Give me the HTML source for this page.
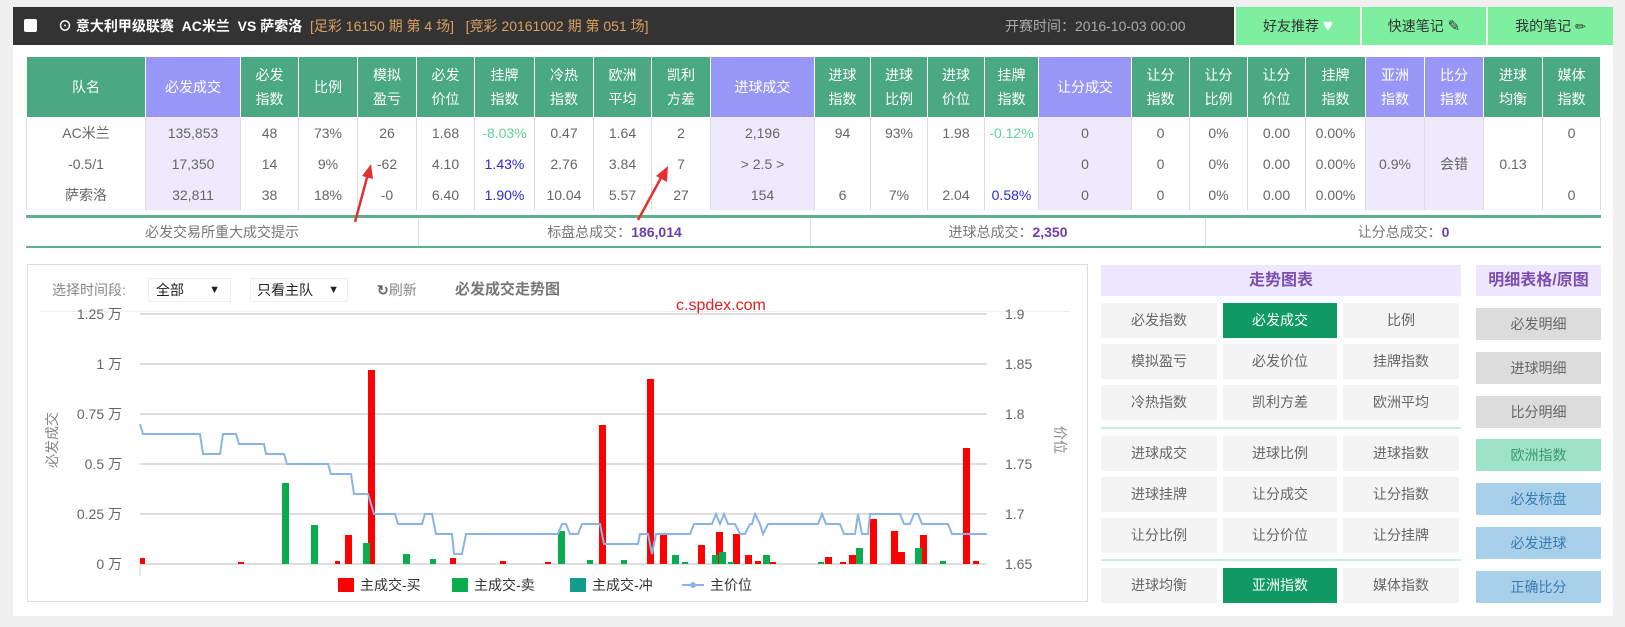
<!DOCTYPE html>
<html><head><meta charset="utf-8">
<style>
*{margin:0;padding:0;box-sizing:border-box}
body{width:1625px;height:627px;background:#f0f0f0;font-family:"Liberation Sans","Noto Sans CJK SC",sans-serif;font-size:14px;color:#666;position:relative;overflow:hidden}
.a{position:absolute}
#top{left:13px;top:7px;width:1221px;height:38px;background:#333;}
.tb{top:7px;height:38px;background:#7def9e;color:#333;font-size:14px;line-height:38px;text-align:center}
#panel{left:13px;top:45px;width:1600px;height:571px;background:#fff}
table{border-collapse:collapse;table-layout:fixed}
#t{left:26px;top:57px;width:1575px}
#t th{height:60px;background:#4aa882;color:#fff;font-weight:normal;font-size:14px;line-height:24px;border-left:1px solid #fff;border-right:1px solid #fff}
#t th.p{background:#9896f7}
#t td{height:31px;text-align:center;border-left:1px solid #ddd;border-right:1px solid #ddd;color:#666;font-size:14px}
#t td.p{background:#efe9fd}
#t td.g{color:#5cd69a}#t td.b{color:#2a2ad0}
#sum{left:26px;top:215px;width:1575px;height:33px;border-top:3px solid #5cb08c;border-bottom:2px solid #5cb08c}
#sum div{position:absolute;top:0;height:28px;line-height:28px;text-align:center;border-right:1px solid #ddd;color:#777}
#sum b{color:#6a3fa8}
#chart{left:27px;top:264px;width:1061px;height:338px;border:1px solid #ddd}
.btn{position:absolute;height:35px;line-height:35px;text-align:center;background:#f4f4f4;color:#666;font-size:14px}
.on{background:#0f9a63;color:#fff}
.sb{position:absolute;left:1476px;width:125px;height:32px;line-height:32px;text-align:center;font-size:14px;background:#dcdcdc;color:#666}
</style></head><body>
<div class="a" id="top"></div>
<div class="a" style="left:24px;top:19px;width:13px;height:13px;background:#fff;border-radius:2px"></div>
<div class="a" style="left:58px;top:7px;line-height:38px;color:#fff;font-weight:bold;font-size:14px;white-space:nowrap">⊙ 意大利甲级联赛 &nbsp;AC米兰 &nbsp;VS 萨索洛 <span style="font-weight:normal;color:#d9a060">&nbsp;[足彩 16150 期 第 4 场] &nbsp; [竞彩 20161002 期 第 051 场]</span></div>
<div class="a" style="left:1005px;top:7px;line-height:38px;color:#aaa;font-size:14px">开赛时间：2016-10-03 00:00</div>
<div class="a tb" style="left:1236px;width:124px">好友推荐 <span style="color:#fff;font-size:17px">♥</span></div>
<div class="a tb" style="left:1362px;width:124px">快速笔记 <span style="font-size:15px">✎</span></div>
<div class="a tb" style="left:1488px;width:125px">我的笔记 <span style="font-size:13px">✏</span></div>
<div class="a" id="panel"></div>

<table class="a" id="t">
<colgroup><col style="width:119px"><col style="width:95px"><col style="width:58px"><col style="width:59px"><col style="width:59px"><col style="width:58px"><col style="width:60px"><col style="width:59px"><col style="width:58px"><col style="width:59px"><col style="width:104px"><col style="width:56px"><col style="width:57px"><col style="width:57px"><col style="width:54px"><col style="width:93px"><col style="width:58px"><col style="width:58px"><col style="width:58px"><col style="width:60px"><col style="width:59px"><col style="width:59px"><col style="width:59px"><col style="width:58px"></colgroup>
<tr><th>队名</th><th class="p">必发成交</th><th>必发<br>指数</th><th>比例</th><th>模拟<br>盈亏</th><th>必发<br>价位</th><th>挂牌<br>指数</th><th>冷热<br>指数</th><th>欧洲<br>平均</th><th>凯利<br>方差</th><th class="p">进球成交</th><th>进球<br>指数</th><th>进球<br>比例</th><th>进球<br>价位</th><th>挂牌<br>指数</th><th class="p">让分成交</th><th>让分<br>指数</th><th>让分<br>比例</th><th>让分<br>价位</th><th>挂牌<br>指数</th><th class="p">亚洲<br>指数</th><th class="p">比分<br>指数</th><th>进球<br>均衡</th><th>媒体<br>指数</th></tr>
<tr><td>AC米兰</td><td class="p">135,853</td><td>48</td><td>73%</td><td>26</td><td>1.68</td><td class="g">-8.03%</td><td>0.47</td><td>1.64</td><td>2</td><td class="p">2,196</td><td>94</td><td>93%</td><td>1.98</td><td class="g">-0.12%</td><td class="p">0</td><td>0</td><td>0%</td><td>0.00</td><td>0.00%</td><td class="p"></td><td class="p"></td><td></td><td>0</td></tr>
<tr><td>-0.5/1</td><td class="p">17,350</td><td>14</td><td>9%</td><td>-62</td><td>4.10</td><td class="b">1.43%</td><td>2.76</td><td>3.84</td><td>7</td><td class="p">&gt; 2.5 &gt;</td><td></td><td></td><td></td><td></td><td class="p">0</td><td>0</td><td>0%</td><td>0.00</td><td>0.00%</td><td class="p">0.9%</td><td class="p">会错</td><td>0.13</td><td></td></tr>
<tr><td>萨索洛</td><td class="p">32,811</td><td>38</td><td>18%</td><td>-0</td><td>6.40</td><td class="b">1.90%</td><td>10.04</td><td>5.57</td><td>27</td><td class="p">154</td><td>6</td><td>7%</td><td>2.04</td><td class="b">0.58%</td><td class="p">0</td><td>0</td><td>0%</td><td>0.00</td><td>0.00%</td><td class="p"></td><td class="p"></td><td></td><td>0</td></tr>
</table>

<div class="a" id="sum">
<div style="left:0;width:393px">必发交易所重大成交提示</div>
<div style="left:393px;width:392px">标盘总成交：<b>186,014</b></div>
<div style="left:785px;width:395px">进球总成交：<b>2,350</b></div>
<div style="left:1180px;width:395px;border-right:none">让分总成交：<b>0</b></div>
</div>

<!-- red arrows -->
<svg class="a" style="left:340px;top:160px" width="340" height="70">
<path d="M15 62 L28 14" stroke="#e53030" stroke-width="2.5"/><path d="M22 16 L31 4 L33 19 Z" fill="#e53030"/>
<path d="M298 60 L322 16" stroke="#e53030" stroke-width="2.5"/><path d="M316 16 L328 6 L327 22 Z" fill="#e53030"/>
</svg>

<div class="a" id="chart"></div>
<div class="a" style="left:52px;top:280px;line-height:20px;font-size:14px;color:#888">选择时间段:</div>
<div class="a" style="left:148px;top:278px;width:83px;height:24px;border:1px solid #eee;line-height:22px;padding-left:7px;color:#222">全部<span style="position:absolute;right:10px;font-size:11px">▼</span></div>
<div class="a" style="left:250px;top:278px;width:98px;height:24px;border:1px solid #eee;line-height:22px;padding-left:6px;color:#222">只看主队<span style="position:absolute;right:8px;font-size:11px">▼</span></div>
<div class="a" style="left:377px;top:280px;line-height:20px;color:#888"><b style="color:#666">↻</b>刷新</div>
<div class="a" style="left:455px;top:280px;line-height:20px;color:#777;font-weight:bold;font-size:15px">必发成交走势图</div>
<div class="a" style="left:40px;top:311px;width:1030px;height:1px;background:#eee"></div>
<div class="a" style="left:676px;top:297px;color:#e02020;font-size:16px">c.spdex.com</div>

<svg class="a" style="left:27px;top:300px" width="1060" height="300" font-family="Liberation Sans, Noto Sans CJK SC, sans-serif" font-size="14" fill="#666">
<g stroke="#d4d4d4" stroke-width="1.5">
<line x1="113" y1="14" x2="960" y2="14"/><line x1="113" y1="64" x2="960" y2="64"/><line x1="113" y1="114" x2="960" y2="114"/><line x1="113" y1="164" x2="960" y2="164"/><line x1="113" y1="214" x2="960" y2="214"/><line x1="113" y1="264" x2="960" y2="264"/>
</g>
<g text-anchor="end"><text x="95" y="19">1.25 万</text><text x="95" y="69">1 万</text><text x="95" y="119">0.75 万</text><text x="95" y="169">0.5 万</text><text x="95" y="219">0.25 万</text><text x="95" y="269">0 万</text></g>
<g><text x="978" y="19">1.9</text><text x="978" y="69">1.85</text><text x="978" y="119">1.8</text><text x="978" y="169">1.75</text><text x="978" y="219">1.7</text><text x="978" y="269">1.65</text></g>
<text transform="translate(30,140) rotate(-90)" text-anchor="middle" fill="#888">必发成交</text>
<text transform="translate(1028,140) rotate(90)" text-anchor="middle" fill="#888">价位</text>
<line x1="113" y1="264" x2="113" y2="276" stroke="#ccc"/>
<g fill="#f00" transform="translate(-27,-300)">
<rect x="140" y="558" width="5" height="6"/><rect x="238" y="562" width="6" height="2"/><rect x="335" y="561" width="5" height="3"/>
<rect x="345" y="535" width="7" height="29"/><rect x="368" y="370" width="7" height="194"/><rect x="450" y="558" width="6" height="6"/>
<rect x="500" y="561" width="6" height="3"/><rect x="545" y="562" width="6" height="2"/>
<rect x="599" y="425" width="7" height="139"/><rect x="647" y="379" width="7" height="185"/><rect x="660" y="534" width="7" height="30"/>
<rect x="698" y="545" width="7" height="19"/><rect x="716" y="532" width="7" height="32"/><rect x="733" y="534" width="7" height="30"/>
<rect x="745" y="555" width="7" height="9"/><rect x="755" y="561" width="6" height="3"/><rect x="770" y="562" width="6" height="2"/>
<rect x="825" y="557" width="7" height="7"/><rect x="849" y="555" width="7" height="9"/><rect x="870" y="519" width="7" height="45"/>
<rect x="891" y="531" width="7" height="33"/><rect x="898" y="552" width="7" height="12"/><rect x="920" y="535" width="7" height="29"/>
<rect x="963" y="448" width="7" height="116"/><rect x="973" y="561" width="6" height="3"/><rect x="840" y="562" width="6" height="2"/>
</g>
<g fill="#0aad4e" transform="translate(-27,-300)">
<rect x="282" y="483" width="7" height="81"/><rect x="311" y="525" width="7" height="39"/><rect x="363" y="543" width="7" height="21"/>
<rect x="403" y="554" width="7" height="10"/><rect x="430" y="559" width="6" height="5"/><rect x="558" y="531" width="7" height="33"/>
<rect x="587" y="560" width="6" height="4"/><rect x="621" y="560" width="6" height="4"/><rect x="672" y="555" width="7" height="9"/>
<rect x="712" y="555" width="6" height="9"/><rect x="719" y="552" width="7" height="12"/><rect x="728" y="562" width="6" height="2"/>
<rect x="763" y="555" width="7" height="9"/><rect x="818" y="562" width="6" height="2"/><rect x="856" y="548" width="7" height="16"/>
<rect x="915" y="548" width="7" height="16"/><rect x="940" y="561" width="6" height="3"/><rect x="682" y="562" width="6" height="2"/>
</g>
<polyline transform="translate(-27,-300)" fill="none" stroke="#8ab4e6" stroke-width="2" points="140,424 143,434 200,434 203,454 220,454 223,434 236,434 239,444 264,444 266,454 284,454 287,464 328,464 331,474 351,474 354,494 368,494 374,514 395,514 398,524 422,524 425,514 432,514 436,534 452,534 454,554 462,554 466,534 558,534 562,524 566,524 570,534 578,534 582,524 600,524 604,544 638,544 640,534 648,534 652,554 656,534 690,534 694,524 712,524 716,514 720,524 724,514 728,524 735,524 740,534 745,534 750,524 752,524 755,514 760,524 763,534 768,524 780,524 818,524 822,514 826,524 840,524 844,534 855,534 858,514 862,534 868,534 870,514 900,514 904,524 910,524 914,514 918,514 922,524 948,524 952,534 987,534"/>
<g transform="translate(-27,-300)">
<rect x="338" y="578" width="16" height="14" fill="#f00"/><text x="360" y="590" fill="#333">主成交-买</text>
<rect x="452" y="578" width="16" height="14" fill="#0aad4e"/><text x="474" y="590" fill="#333">主成交-卖</text>
<rect x="570" y="578" width="16" height="14" fill="#149c8e"/><text x="592" y="590" fill="#333">主成交-冲</text>
<line x1="682" y1="585" x2="704" y2="585" stroke="#8ab4e6" stroke-width="2"/><circle cx="693" cy="585" r="3" fill="#8ab4e6"/><text x="710" y="590" fill="#333">主价位</text>
</g>
</svg>

<div class="a" style="left:1101px;top:265px;width:360px;height:31px;background:#efe7fd;color:#7a4fb0;font-weight:bold;font-size:16px;line-height:31px;text-align:center">走势图表</div>
<div class="btn" style="left:1101px;top:303px;width:116px">必发指数</div><div class="btn on" style="left:1223px;top:303px;width:114px">必发成交</div><div class="btn" style="left:1343px;top:303px;width:116px">比例</div>
<div class="btn" style="left:1101px;top:344px;width:116px">模拟盈亏</div><div class="btn" style="left:1223px;top:344px;width:114px">必发价位</div><div class="btn" style="left:1343px;top:344px;width:116px">挂牌指数</div>
<div class="btn" style="left:1101px;top:385px;width:116px">冷热指数</div><div class="btn" style="left:1223px;top:385px;width:114px">凯利方差</div><div class="btn" style="left:1343px;top:385px;width:116px">欧洲平均</div>
<div class="a" style="left:1101px;top:427px;width:360px;height:2px;background:#c8eedc"></div>
<div class="btn" style="left:1101px;top:436px;width:116px">进球成交</div><div class="btn" style="left:1223px;top:436px;width:114px">进球比例</div><div class="btn" style="left:1343px;top:436px;width:116px">进球指数</div>
<div class="btn" style="left:1101px;top:477px;width:116px">进球挂牌</div><div class="btn" style="left:1223px;top:477px;width:114px">让分成交</div><div class="btn" style="left:1343px;top:477px;width:116px">让分指数</div>
<div class="btn" style="left:1101px;top:518px;width:116px">让分比例</div><div class="btn" style="left:1223px;top:518px;width:114px">让分价位</div><div class="btn" style="left:1343px;top:518px;width:116px">让分挂牌</div>
<div class="a" style="left:1101px;top:559px;width:360px;height:2px;background:#c8eedc"></div>
<div class="btn" style="left:1101px;top:568px;width:116px">进球均衡</div><div class="btn on" style="left:1223px;top:568px;width:114px">亚洲指数</div><div class="btn" style="left:1343px;top:568px;width:116px">媒体指数</div>

<div class="a" style="left:1476px;top:265px;width:125px;height:31px;background:#efe7fd;color:#7a4fb0;font-weight:bold;font-size:16px;line-height:31px;text-align:center;white-space:nowrap">明细表格/原图</div>
<div class="sb" style="top:308px">必发明细</div>
<div class="sb" style="top:352px">进球明细</div>
<div class="sb" style="top:396px">比分明细</div>
<div class="sb" style="top:439px;background:#9ee3c8;color:#3a9a6e">欧洲指数</div>
<div class="sb" style="top:483px;background:#a9d0ea;color:#3a7ab0">必发标盘</div>
<div class="sb" style="top:527px;background:#a9d0ea;color:#3a7ab0">必发进球</div>
<div class="sb" style="top:571px;background:#a9d0ea;color:#3a7ab0">正确比分</div>
</body></html>
